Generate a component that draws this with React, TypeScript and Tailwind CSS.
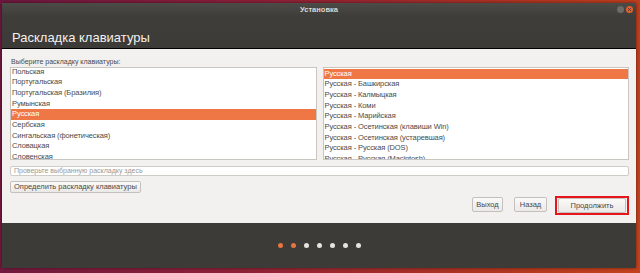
import { X } from 'lucide-react';

const LEFT = [
    'Польская',
    'Португальская',
    'Португальская (Бразилия)',
    'Румынская',
    'Русская',
    'Сербская',
    'Сингальская (фонетическая)',
    'Словацкая',
    'Словенская',
];

const RIGHT = [
    'Русская',
    'Русская - Башкирская',
    'Русская - Калмыцкая',
    'Русская - Коми',
    'Русская - Марийская',
    'Русская - Осетинская (клавиши Win)',
    'Русская - Осетинская (устаревшая)',
    'Русская - Русская (DOS)',
    'Русская - Русская (Macintosh)',
];

const FONT = "font-['Liberation_Sans',Arial,sans-serif]";
const BTN =
    'border border-[#c4c1bc] rounded-[2px] bg-[linear-gradient(#fafaf9,#ebe9e7)] text-[7.5px] leading-[10px] text-[#4a4a4a]';

function List({ items, selected, offset }: { items: string[]; selected: string; offset: string }) {
    return (
        <div className="flex-1 h-[93px] overflow-hidden border border-[#c9c6c1] bg-white">
            <div className={offset}>
                {items.map(it => (
                    <div
                        key={it}
                        className={
                            'h-[10.7px] leading-[10.7px] px-[1px] text-[7.5px] tracking-[-0.1px] whitespace-nowrap ' +
                            (it === selected ? 'bg-[#ef7746] text-white' : 'text-[#4a4a4a]')
                        }
                    >
                        {it}
                    </div>
                ))}
            </div>
        </div>
    );
}

export default function App() {
    return (
        <div
            className={`w-[640px] h-[273px] pt-[3px] pl-[2px] pr-[4px] pb-[5px] bg-[linear-gradient(100deg,#6e173f_0%,#8d2038_40%,#b2361f_80%,#c4431d_100%)] ${FONT}`}
        >
            <div className="flex flex-col h-full shadow-[0_0_3px_rgba(0,0,0,0.5)]">
                {/* ── Title bar + header ── */}
                <div className="bg-[linear-gradient(#4d4b47,#3e3d39_30%,#3c3b37)] border-b border-black">
                    <div className="relative h-[14px] flex items-center justify-center">
                        <span className="text-[7.5px] font-bold text-[#dcd8cf]">Установка</span>
                        <div className="absolute right-[3px] top-[3px] flex gap-[2px]">
                            <span className="w-[7px] h-[7px] rounded-full bg-[#6c6b67]" />
                            <span className="w-[7px] h-[7px] rounded-full bg-[#e95e2d] flex items-center justify-center">
                                <X className="w-[5px] h-[5px] text-[#3c3b37]" strokeWidth={4} />
                            </span>
                        </div>
                    </div>
                    <div className="h-[31px] pl-[10px] pt-[8px]">
                        <span className="text-[13px] text-[#f2f1ef] leading-[16px]">Раскладка клавиатуры</span>
                    </div>
                </div>

                {/* ── Content ── */}
                <div className="h-[174px] bg-[#f2f1f0] pt-[8px] pl-[8px] pr-[7px] flex flex-col">
                    <div className="h-[10px] leading-[10px] text-[7px] text-[#4a4a4a] pl-[1px]">
                        Выберите раскладку клавиатуры:
                    </div>
                    <div className="flex gap-[6px]">
                        <List items={LEFT} selected="Русская" offset="-mt-[1.5px]" />
                        <List items={RIGHT} selected="Русская" offset="mt-[0.5px]" />
                    </div>
                    <div className="mt-[6px] h-[10px] border border-[#cfccc7] bg-white rounded-[2px] px-[3px] text-[7px] leading-[8px] text-[#9a9894]">
                        Проверьте выбранную раскладку здесь
                    </div>
                    <div className="mt-[5px] flex">
                        <button className={`h-[12px] px-[3px] ${BTN}`}>Определить раскладку клавиатуры</button>
                    </div>
                    <div className="mt-[3px] flex justify-end items-start">
                        <button className={`mt-[1px] w-[31px] h-[15px] ${BTN}`}>Выход</button>
                        <button className={`mt-[1px] ml-[11px] w-[33px] h-[15px] ${BTN}`}>Назад</button>
                        <div className="ml-[8px] w-[74px] h-[19px] border-2 border-[#e8141c] pl-[1px] flex items-start">
                            <button className={`w-[68px] h-[15px] ${BTN}`}>Продолжить</button>
                        </div>
                    </div>
                </div>

                {/* ── Footer / progress dots ── */}
                <div className="flex-1 bg-[#3c3b37] flex items-center justify-center gap-[8px]">
                    {[0, 1, 2, 3, 4, 5, 6].map(i => (
                        <span
                            key={i}
                            className={'w-[5px] h-[5px] rounded-full ' + (i < 2 ? 'bg-[#e8743f]' : 'bg-[#e6e4e0]')}
                        />
                    ))}
                </div>
            </div>
        </div>
    );
}
